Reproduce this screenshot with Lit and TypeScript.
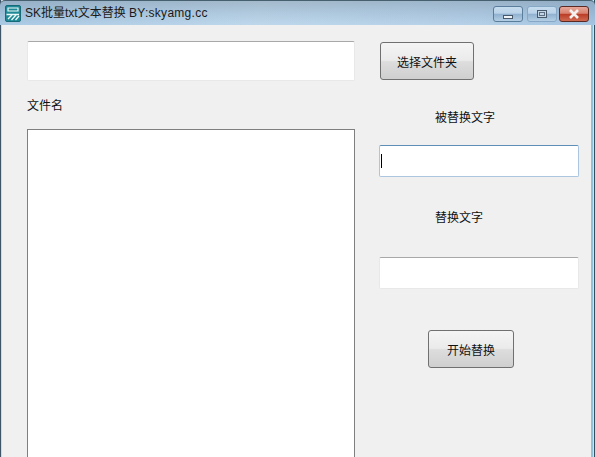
import { LitElement, html, css } from "lit";
import { customElement } from "lit/decorators.js";

const FONT = css`"Liberation Sans", "Noto Sans CJK SC", sans-serif`;

@customElement("app-root")
export class AppRoot extends LitElement {
  static styles = css`
    :host { display: block; width: 595px; height: 457px; overflow: hidden; font-family: ${FONT}; font-size: 12px; color: #111; }
    .window { width: 595px; height: 457px; box-sizing: border-box; display: flex; flex-direction: column; position: relative; background: linear-gradient(90deg, #3d5566 0 1px, #c9dcea 1px 2px, #f0f0f0 2px, #f0f0f0 591px, #8fc2d8 591px 593px, #cfe3ee 593px 594px, #34505f 594px); }
    .title { height: 25px; flex: none; box-sizing: border-box; display: flex; align-items: center; padding: 0 6px 0 5px; gap: 4px; border-top: 1px solid #47606f; border-radius: 5px 5px 0 0; background: linear-gradient(180deg, rgba(120,130,140,.32) 0, rgba(120,130,140,.12) 50%, rgba(255,255,255,.08) 100%), linear-gradient(90deg, #a4c6e2 0, #b9d4ea 260px, #aecce6 480px, #9cbfdf 595px); }
    .title-text { font-size: 12px; color: #1a1a1a; line-height: 16px; white-space: nowrap; }
    .by { letter-spacing: 0.28px; }
    .icon { width: 16px; height: 17px; flex: none; display: block; margin-top: 1px; }
    .caps { margin-left: auto; display: flex; align-self: flex-start; margin-top: 5px; }
    .cap { width: 30px; height: 16px; box-sizing: border-box; border: 1px solid #5b7d9c; border-radius: 3px; display: flex; align-items: center; justify-content: center; background: linear-gradient(#c6dcee 0, #bad2e8 45%, #8fb0cf 50%, #b4cee4 100%); }
    .cap.min { margin-right: 4px; }
    .cap.max { margin-right: 2px; border-color: #86a8c6; }
    .cap.close { border-color: #5a2a22; background: linear-gradient(#e6a79a 0, #d9826f 45%, #bb3d28 52%, #cf6a50 100%); }
    .glyph-min { width: 10px; height: 4px; box-sizing: border-box; border: 1px solid #46586a; background: #eef3f8; margin-top: 6px; }
    .glyph-max { width: 10px; height: 8px; box-sizing: border-box; border: 1px solid #46586a; background: #c3d6e6; display: flex; align-items: center; justify-content: center; }
    .glyph-max::after { content: ""; width: 4px; height: 2px; border: 1px solid #5d7083; box-sizing: content-box; margin: 0; }
    .client { flex: 1; min-height: 0; display: flex; padding: 16px 0 0 27px; gap: 24px; }
    .left { width: 328px; flex: none; display: flex; flex-direction: column; }
    .right { width: 200px; flex: none; display: flex; flex-direction: column; }
    .field { display: block; flex: none; box-sizing: border-box; background: #fff; border: 1px solid #e8e8e8; border-top-color: #a8a8a8; border-radius: 2px; }
    .path { height: 40px; }
    .name { margin: 17px 0 0; line-height: 16px; height: 16px; flex: none; }
    .list { margin-top: 15px; flex: none; height: 345px; box-sizing: border-box; background: #fff; border: 1px solid #7f7f7f; }
    .btn { flex: none; box-sizing: border-box; border: 1px solid #707070; border-radius: 3px; font: 12px ${FONT}; color: #111; padding: 0; display: block; background: linear-gradient(#f4f4f4 0, #ebebeb 48%, #dddddd 52%, #cfcfcf 100%); }
    .pick { width: 94px; height: 38px; margin: 1px 0 0 1px; }
    .cap-label { line-height: 16px; height: 16px; margin: 0; padding-left: 56px; flex: none; }
    .l1 { margin-top: 30px; }
    .l2 { margin-top: 33px; }
    .active { height: 32px; margin-top: 19px; border: 1px solid #abc6de; border-top-color: #5f8fb5; display: flex; align-items: center; padding-left: 1px; }
    .caret { width: 1px; height: 14px; background: #000; }
    .plain { height: 32px; margin-top: 31px; }
    .start { width: 86px; height: 38px; margin: 41px 0 0 49px; }
  `;

  render() {
    return html`
      <div class="window">
        <div class="title">
          <svg class="icon" viewBox="0 0 16 17">
            <rect x="0.5" y="0.5" width="15" height="16" rx="1.5" fill="#1f8a96" stroke="#176a78"/>
            <path d="M3 3H13V6H3Z" stroke="#eefafa" stroke-width="1.2" fill="none"/>
            <path d="M1.5 9.5H14M3 14L7 10M6.5 15L11 10M10.5 15L14 11" stroke="#eefafa" stroke-width="1.3" fill="none"/>
          </svg>
          <span class="title-text">SK批量txt文本替换 <span class="by">BY:skyamg.cc</span></span>
          <div class="caps">
            <div class="cap min"><div class="glyph-min"></div></div>
            <div class="cap max"><div class="glyph-max"></div></div>
            <div class="cap close">
              <svg width="12" height="10" viewBox="0 0 12 10"><path d="M2 1L10 9M10 1L2 9" stroke="#f6f1ef" stroke-width="2.6" fill="none"/></svg>
            </div>
          </div>
        </div>
        <div class="client">
          <div class="left">
            <div class="field path"></div>
            <p class="name">文件名</p>
            <div class="list"></div>
          </div>
          <div class="right">
            <button class="btn pick">选择文件夹</button>
            <p class="cap-label l1">被替换文字</p>
            <div class="field active"><span class="caret"></span></div>
            <p class="cap-label l2">替换文字</p>
            <div class="field plain"></div>
            <button class="btn start">开始替换</button>
          </div>
        </div>
      </div>
    `;
  }
}
